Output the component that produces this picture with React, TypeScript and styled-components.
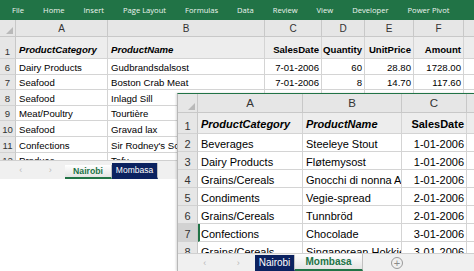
import React from "react";
import styled, { createGlobalStyle } from "styled-components";

const Global = createGlobalStyle`
  html, body { margin: 0; padding: 0; background: #ffffff; }
  body { font-family: "Liberation Sans", Arial, sans-serif; }
  * { box-sizing: border-box; }
`;

const Page = styled.div`
  position: relative;
  width: 474px;
  height: 271px;
  overflow: hidden;
  background: #ffffff;
`;

const BackWindow = styled.div`
  display: flex;
  flex-direction: column;
  width: 474px;
  height: 179px;
  background: #ffffff;
`;

const Ribbon = styled.div`
  display: flex;
  align-items: center;
  gap: 19px;
  height: 20px;
  padding-left: 12px;
  background: #217346;
  color: #eef5f0;
  font-family: "Open Sans", "Liberation Sans", sans-serif;
  font-size: 7.6px;
  white-space: nowrap;
  flex-shrink: 0;
`;

const RibbonItem = styled.span``;

const Grid = styled.div`
  flex: 1;
  overflow: hidden;
  display: flex;
  flex-direction: column;
`;

const Row = styled.div<{ $h: number }>`
  display: flex;
  height: ${(p) => p.$h}px;
  flex-shrink: 0;
`;

const Corner = styled.div<{ $w: number }>`
  position: relative;
  width: ${(p) => p.$w}px;
  flex-shrink: 0;
  background: #e6e6e6;
  border-right: 1px solid #c8c8c8;
  border-bottom: 1px solid #c8c8c8;
  &::after {
    content: "";
    position: absolute;
    right: 2px;
    bottom: 2px;
    width: 0;
    height: 0;
    border-left: 7px solid transparent;
    border-bottom: 7px solid #b9b9b9;
  }
`;

const ColHead = styled.div<{ $w: number; $fs: number }>`
  width: ${(p) => p.$w}px;
  flex-shrink: 0;
  display: flex;
  align-items: center;
  justify-content: center;
  background: #e6e6e6;
  color: #333;
  font-size: ${(p) => p.$fs}px;
  border-right: 1px solid #c8c8c8;
  border-bottom: 1px solid #c8c8c8;
`;

const RowNum = styled.div<{ $w: number; $fs: number; $sel?: boolean }>`
  width: ${(p) => p.$w}px;
  flex-shrink: 0;
  display: flex;
  align-items: flex-end;
  justify-content: center;
  padding-bottom: 1px;
  background: ${(p) => (p.$sel ? "#d2d2d2" : "#e6e6e6")};
  color: #333;
  font-size: ${(p) => p.$fs}px;
  border-right: 1px solid #c8c8c8;
  border-bottom: 1px solid #d2d2d2;
`;

const Cell = styled.div<{
  $w: number;
  $fs: number;
  $right?: boolean;
  $bold?: boolean;
  $italic?: boolean;
  $head?: boolean;
  $sel?: boolean;
}>`
  width: ${(p) => p.$w}px;
  flex-shrink: 0;
  display: flex;
  align-items: flex-end;
  justify-content: ${(p) => (p.$right ? "flex-end" : "flex-start")};
  padding: 0 2px ${(p) => (p.$head ? 3 : 1)}px ${(p) => (p.$sel ? 1 : 3)}px;
  background: ${(p) => (p.$head ? "#ededed" : "#ffffff")};
  color: #000;
  font-size: ${(p) => p.$fs}px;
  font-weight: ${(p) => (p.$bold ? 700 : 400)};
  font-style: ${(p) => (p.$italic ? "italic" : "normal")};
  white-space: nowrap;
  overflow: hidden;
  border-right: 1px solid #d4d4d4;
  border-bottom: 1px solid #d4d4d4;
  border-left: ${(p) => (p.$sel ? "2px solid #217346" : "none")};
`;

const TabBar = styled.div<{ $h: number; $pl: number }>`
  display: flex;
  align-items: stretch;
  height: ${(p) => p.$h}px;
  flex-shrink: 0;
  padding-left: ${(p) => p.$pl}px;
  background: #f0f0f0;
  border-top: 1px solid #d0d0d0;
`;

const Arrows = styled.div<{ $w: number }>`
  display: flex;
  align-items: center;
  justify-content: space-around;
  width: ${(p) => p.$w}px;
  color: #b8b8b8;
  font-size: 9px;
`;

const Tab = styled.div<{ $w: number; $active?: boolean; $fs: number; $mt: number }>`
  width: ${(p) => p.$w}px;
  margin-top: ${(p) => p.$mt}px;
  display: flex;
  align-items: center;
  justify-content: center;
  font-size: ${(p) => p.$fs}px;
  font-weight: ${(p) => (p.$active ? 700 : 400)};
  color: ${(p) => (p.$active ? "#217346" : "#ffffff")};
  background: ${(p) =>
    p.$active ? "linear-gradient(#ffffff, #e4e4e4)" : "#0b2260"};
  border-bottom: ${(p) => (p.$active ? "2px solid #217346" : "2px solid #0b2260")};
  border-right: 1px solid #c0c0c0;
`;

const Plus = styled.div`
  align-self: center;
  margin-left: 28px;
  width: 12px;
  height: 12px;
  border-radius: 50%;
  border: 1px solid #9a9a9a;
  color: #8a8a8a;
  font-size: 11px;
  line-height: 10px;
  text-align: center;
`;

const FrontWindow = styled.div`
  position: absolute;
  left: 177px;
  top: 93px;
  width: 297px;
  height: 178px;
  display: flex;
  flex-direction: column;
  background: #ffffff;
  border-top: 1px solid #217346;
  border-left: 1px solid #b8b8b8;
  box-shadow: -1px 0 2px rgba(0, 0, 0, 0.15);
`;

type Col = { key: string; w: number; right?: boolean };
type SheetProps = {
  cols: Col[];
  rnW: number;
  headH: number;
  row1H: number;
  rowH: number;
  fs: number;
  headFs: number;
  headers: string[];
  rows: { n: number; cells: string[] }[];
  selRow?: number;
};

function SheetGrid({ cols, rnW, headH, row1H, rowH, fs, headFs, headers, rows, selRow }: SheetProps) {
  return (
    <Grid>
      <Row $h={headH}>
        <Corner $w={rnW} />
        {cols.map((c) => (
          <ColHead key={c.key} $w={c.w} $fs={headFs}>
            {c.key}
          </ColHead>
        ))}
      </Row>
      <Row $h={row1H}>
        <RowNum $w={rnW} $fs={fs}>1</RowNum>
        {cols.map((c, i) => (
          <Cell key={c.key} $w={c.w} $fs={fs} $right={c.right} $bold $italic={!c.right} $head>
            {headers[i] ?? ""}
          </Cell>
        ))}
      </Row>
      {rows.map((r) => (
        <Row key={r.n} $h={rowH}>
          <RowNum $w={rnW} $fs={fs} $sel={r.n === selRow}>
            {r.n}
          </RowNum>
          {cols.map((c, i) => (
            <Cell
              key={c.key}
              $w={c.w}
              $fs={fs}
              $right={c.right}
              $sel={i === 0 && r.n === selRow}
            >
              {r.cells[i] ?? ""}
            </Cell>
          ))}
        </Row>
      ))}
    </Grid>
  );
}

const backCols: Col[] = [
  { key: "A", w: 92 },
  { key: "B", w: 157 },
  { key: "C", w: 57, right: true },
  { key: "D", w: 43, right: true },
  { key: "E", w: 49, right: true },
  { key: "F", w: 50, right: true },
  { key: "G", w: 40 },
];

const backRows = [
  { n: 6, cells: ["Dairy Products", "Gudbrandsdalsost", "7-01-2006", "60", "28.80", "1728.00"] },
  { n: 7, cells: ["Seafood", "Boston Crab Meat", "7-01-2006", "8", "14.70", "117.60"] },
  { n: 8, cells: ["Seafood", "Inlagd Sill", "7-01-2006", "20", "15.20", "304.00"] },
  { n: 9, cells: ["Meat/Poultry", "Tourtière", "7-01-2006", "15", "5.90", "88.50"] },
  { n: 10, cells: ["Seafood", "Gravad lax", "8-01-2006", "12", "20.80", "249.60"] },
  { n: 11, cells: ["Confections", "Sir Rodney's Scones", "8-01-2006", "10", "8.00", "80.00"] },
  { n: 12, cells: ["Produce", "Tofu", "8-01-2006", "5", "18.60", "93.00"] },
];

const frontCols: Col[] = [
  { key: "A", w: 105 },
  { key: "B", w: 99 },
  { key: "C", w: 65, right: true },
  { key: "D", w: 60, right: true },
];

const frontRows = [
  { n: 2, cells: ["Beverages", "Steeleye Stout", "1-01-2006", "12"] },
  { n: 3, cells: ["Dairy Products", "Fløtemysost", "1-01-2006", "10"] },
  { n: 4, cells: ["Grains/Cereals", "Gnocchi di nonna Alice", "1-01-2006", "5"] },
  { n: 5, cells: ["Condiments", "Vegie-spread", "2-01-2006", "8"] },
  { n: 6, cells: ["Grains/Cereals", "Tunnbröd", "2-01-2006", "20"] },
  { n: 7, cells: ["Confections", "Chocolade", "3-01-2006", "6"] },
  { n: 8, cells: ["Grains/Cereals", "Singaporean Hokkien Fried Mee", "3-01-2006", "9"] },
];

const ribbonItems = ["File", "Home", "Insert", "Page Layout", "Formulas", "Data", "Review", "View", "Developer", "Power Pivot"];

export default function App() {
  return (
    <Page>
      <Global />
      <BackWindow>
        <Ribbon>
          {ribbonItems.map((t) => (
            <RibbonItem key={t}>{t}</RibbonItem>
          ))}
        </Ribbon>
        <SheetGrid
          cols={backCols}
          rnW={16}
          headH={17}
          row1H={22}
          rowH={15.6}
          fs={9.6}
          headFs={10}
          headers={["ProductCategory", "ProductName", "SalesDate", "Quantity", "UnitPrice", "Amount", ""]}
          rows={backRows}
        />
        <TabBar $h={19} $pl={6}>
          <Arrows $w={59}>
            <span>‹</span>
            <span>›</span>
          </Arrows>
          <Tab $w={47} $active $fs={8.7} $mt={4}>Nairobi</Tab>
          <Tab $w={46} $fs={8.5} $mt={2}>Mombasa</Tab>
        </TabBar>
      </BackWindow>
      <FrontWindow>
        <SheetGrid
          cols={frontCols}
          rnW={20}
          headH={19}
          row1H={21}
          rowH={18}
          fs={11}
          headFs={11.5}
          headers={["ProductCategory", "ProductName", "SalesDate", "Quantity"]}
          rows={frontRows}
          selRow={7}
        />
        <TabBar $h={18} $pl={10}>
          <Arrows $w={67}>
            <span>‹</span>
            <span>›</span>
          </Arrows>
          <Tab $w={40} $fs={10} $mt={1}>Nairobi</Tab>
          <Tab $w={68} $active $fs={10} $mt={0}>Mombasa</Tab>
          <Plus>+</Plus>
        </TabBar>
      </FrontWindow>
    </Page>
  );
}
